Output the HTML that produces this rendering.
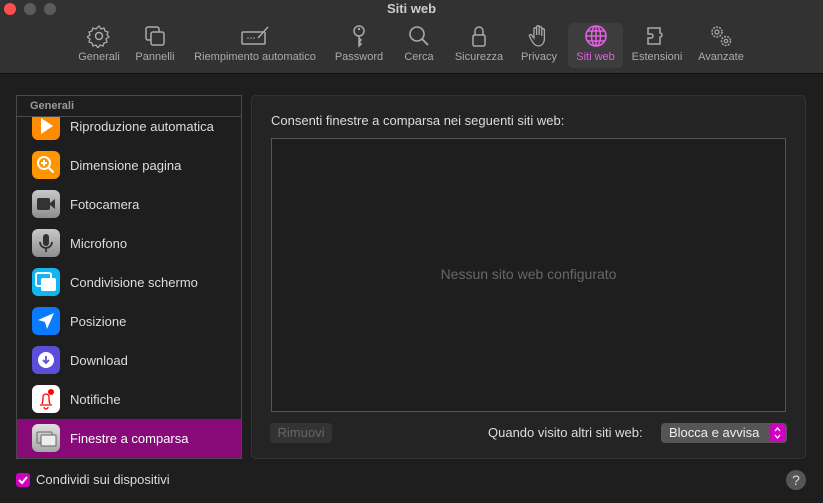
<!DOCTYPE html>
<html><head><meta charset="utf-8"><style>
*{margin:0;padding:0;box-sizing:border-box}
body{width:823px;height:503px;background:#1e1e1e;font-family:"Liberation Sans",sans-serif;position:relative;overflow:hidden;color:#ddd}
.tb{position:absolute;left:0;top:0;width:823px;height:74px;background:#323232;border-bottom:1px solid #111}
.dot{position:absolute;top:3px;width:12px;height:12px;border-radius:50%}
.title{position:absolute;top:1px;left:0;width:823px;text-align:center;font-size:13px;font-weight:bold;color:#ccc}
.ti{position:absolute;top:24px;text-align:center;font-size:11px;color:#aaa}
.ti svg{display:block;margin:0 auto 3px;height:24px}
.ti span{white-space:nowrap}
.sel{position:absolute;left:568px;top:23px;width:55px;height:45px;background:#3d3d3d;border-radius:5px}
.side{position:absolute;left:16px;top:95px;width:226px;height:364px;border:1px solid #4a4a4a;background:#1e1e1e;overflow:hidden}
.sh{position:relative;z-index:2;background:#1e1e1e;height:21px;border-bottom:1px solid #4a4a4a;font-size:11px;font-weight:bold;color:#999;padding:4px 0 0 13px}
.row{position:absolute;left:0;width:224px;height:39px;font-size:13px;color:#ddd}
.row .ic{position:absolute;left:15px;top:5px;width:28px;height:28px;border-radius:6px}
.row span{position:absolute;left:53px;top:12px}
.panel{position:absolute;left:251px;top:95px;width:555px;height:364px;background:#242424;border:1px solid #333;border-radius:5px}
.box{position:absolute;left:271px;top:138px;width:515px;height:274px;border:1px solid #555;background:#1e1e1e}
</style></head><body>
<div class="tb">
<div class="dot" style="left:4px;background:#fe4e4f"></div>
<div class="dot" style="left:24px;background:#5b5b5b"></div>
<div class="dot" style="left:44px;background:#5b5b5b"></div>
<div class="title">Siti web</div>
<div class="sel"></div>
<div class="ti" style="left:74px;width:50px"><svg viewBox="0 0 24 24" width="24"><circle cx="12" cy="12" r="3.5" fill="none" stroke="#aaa" stroke-width="1.5"/><path d="M12 2l2 3 3-1 1 3 3 1-1 3 2 2-3 2 1 3-3 1-1 3-3-1-2 3-2-3-3 1-1-3-3-1 1-3-3-2 3-2-1-3 3-1 1-3 3 1z" fill="none" stroke="#aaa" stroke-width="1.3"/></svg><span>Generali</span></div>
<div class="ti" style="left:131px;width:48px"><svg viewBox="0 0 24 24" width="24"><rect x="3" y="3" width="13" height="13" rx="2" fill="none" stroke="#aaa" stroke-width="1.5"/><rect x="8" y="8" width="13" height="13" rx="2" fill="#323232" stroke="#aaa" stroke-width="1.5"/></svg><span>Pannelli</span></div>
<div class="ti" style="left:188px;width:134px"><svg viewBox="0 0 30 24" width="30"><rect x="2" y="8" width="23" height="12" rx="1" fill="none" stroke="#aaa" stroke-width="1.5"/><path d="M18 14L28 3" stroke="#aaa" stroke-width="1.5"/><circle cx="8" cy="14" r=".8" fill="#aaa"/><circle cx="11" cy="14" r=".8" fill="#aaa"/><circle cx="14" cy="14" r=".8" fill="#aaa"/></svg><span>Riempimento automatico</span></div>
<div class="ti" style="left:333px;width:52px"><svg viewBox="0 0 24 24" width="24"><circle cx="12" cy="7" r="5" fill="none" stroke="#aaa" stroke-width="1.5"/><path d="M12 12v10l2-2-2-2 2-2-2-2" fill="none" stroke="#aaa" stroke-width="1.5"/><circle cx="12" cy="5" r="1.2" fill="#aaa"/></svg><span>Password</span></div>
<div class="ti" style="left:400px;width:38px"><svg viewBox="0 0 24 24" width="24"><circle cx="10" cy="10" r="7" fill="none" stroke="#aaa" stroke-width="1.6"/><path d="M15 15l6 6" stroke="#aaa" stroke-width="1.8"/></svg><span>Cerca</span></div>
<div class="ti" style="left:451px;width:56px"><svg viewBox="0 0 24 24" width="24"><path d="M8 11V7a4 4 0 018 0v4" fill="none" stroke="#aaa" stroke-width="1.5"/><rect x="6" y="11" width="12" height="11" rx="1.5" fill="none" stroke="#aaa" stroke-width="1.5"/></svg><span>Sicurezza</span></div>
<div class="ti" style="left:516px;width:46px"><svg viewBox="0 0 24 24" width="24"><path d="M7 14V5a1.3 1.3 0 012.6 0v6V3a1.3 1.3 0 012.6 0v8V4a1.3 1.3 0 012.6 0v8V6a1.3 1.3 0 012.6 0v9c0 4-3 7-6 7s-5-2-7-6l-2-4a1.3 1.3 0 012.3-1z" fill="none" stroke="#aaa" stroke-width="1.3"/></svg><span>Privacy</span></div>
<div class="ti" style="left:568px;width:55px;color:#e45fe4"><svg viewBox="0 0 24 24" width="24"><circle cx="12" cy="12" r="10" fill="none" stroke="#e45fe4" stroke-width="1.6"/><ellipse cx="12" cy="12" rx="4.5" ry="10" fill="none" stroke="#e45fe4" stroke-width="1.5"/><path d="M2 12h20M4 7h16M4 17h16M12 2v20" stroke="#e45fe4" stroke-width="1.5"/></svg><span>Siti web</span></div>
<div class="ti" style="left:628px;width:58px"><svg viewBox="0 0 24 24" width="24"><path d="M3 4h12v5a2 2 0 110 4v7H3v-6h3a2 2 0 000-4H3z" fill="none" stroke="#aaa" stroke-width="1.5"/></svg><span>Estensioni</span></div>
<div class="ti" style="left:694px;width:54px"><svg viewBox="0 0 24 24" width="24"><circle cx="8" cy="8" r="5" fill="none" stroke="#aaa" stroke-width="1.5" stroke-dasharray="2 1.2"/><circle cx="8" cy="8" r="2" fill="none" stroke="#aaa" stroke-width="1.2"/><circle cx="17" cy="17" r="4.5" fill="none" stroke="#aaa" stroke-width="1.5" stroke-dasharray="2 1.2"/><circle cx="17" cy="17" r="1.7" fill="none" stroke="#aaa" stroke-width="1.2"/></svg><span>Avanzate</span></div>
</div>

<div class="side">
<div class="sh">Generali</div>
<div class="row" style="top:11px"><div class="ic" style="background:#ff8c00"><svg width="28" height="28"><path d="M9 6l12 8-12 8z" fill="#fff"/></svg></div><span>Riproduzione automatica</span></div>
<div class="row" style="top:50px"><div class="ic" style="background:#ff9500"><svg width="28" height="28"><circle cx="12" cy="12" r="6" fill="none" stroke="#fff" stroke-width="2"/><path d="M16.5 16.5l5 5M12 9v6M9 12h6" stroke="#fff" stroke-width="2"/></svg></div><span>Dimensione pagina</span></div>
<div class="row" style="top:89px"><div class="ic" style="background:linear-gradient(#c8c8c8,#8e8e8e)"><svg width="28" height="28"><rect x="5" y="8" width="13" height="12" rx="2" fill="#333"/><path d="M18 13l5-4v10l-5-4z" fill="#333"/></svg></div><span>Fotocamera</span></div>
<div class="row" style="top:128px"><div class="ic" style="background:linear-gradient(#c8c8c8,#8e8e8e)"><svg width="28" height="28"><rect x="11" y="5" width="6" height="12" rx="3" fill="#333"/><path d="M8 13a6 6 0 0012 0M14 19v4" fill="none" stroke="#333" stroke-width="1.8"/></svg></div><span>Microfono</span></div>
<div class="row" style="top:167px"><div class="ic" style="background:#12b5f0"><svg width="28" height="28"><rect x="4" y="5" width="15" height="13" rx="2" fill="none" stroke="#fff" stroke-width="2"/><rect x="9" y="10" width="15" height="13" rx="2" fill="#fff"/></svg></div><span>Condivisione schermo</span></div>
<div class="row" style="top:206px"><div class="ic" style="background:#0a7aff"><svg width="28" height="28"><path d="M22 6L6 13l7 2 2 7z" fill="#fff"/></svg></div><span>Posizione</span></div>
<div class="row" style="top:245px"><div class="ic" style="background:#5b4fd9"><svg width="28" height="28"><circle cx="14" cy="14" r="8" fill="#fff"/><path d="M14 10v7M11 14l3 3 3-3" fill="none" stroke="#5b4fd9" stroke-width="1.8"/></svg></div><span>Download</span></div>
<div class="row" style="top:284px"><div class="ic" style="background:#fff"><svg width="28" height="28"><path d="M8 20h12M10 19c1-2 1-5 1-7a3 3 0 016 0c0 2 0 5 1 7M12 22a2 2 0 004 0" fill="none" stroke="#f00" stroke-width="1.3"/><circle cx="19" cy="7" r="3" fill="#f00"/></svg></div><span>Notifiche</span></div>
<div class="row" style="top:323px;background:#880a78"><div class="ic" style="background:linear-gradient(#e0e0e0,#a8a8a8)"><svg width="28" height="28"><rect x="5" y="8" width="15" height="11" rx="1" fill="none" stroke="#666"/><rect x="9" y="11" width="15" height="11" rx="1" fill="#eee" stroke="#666"/></svg></div><span style="color:#fff">Finestre a comparsa</span></div>
</div>

<div style="position:absolute;left:16px;top:473px;width:14px;height:14px;border-radius:3px;background:#d000c0"><svg width="14" height="14"><path d="M3 7l3 3 5-6" fill="none" stroke="#fff" stroke-width="2"/></svg></div>
<div style="position:absolute;left:36px;top:472px;font-size:13px;color:#ddd">Condividi sui dispositivi</div>

<div class="panel"></div>
<div style="position:absolute;left:271px;top:113px;font-size:13px;color:#ddd">Consenti finestre a comparsa nei seguenti siti web:</div>
<div class="box"></div>
<div style="position:absolute;left:271px;top:266px;width:515px;text-align:center;font-size:14px;color:#676767">Nessun sito web configurato</div>
<div style="position:absolute;left:270px;top:423px;width:62px;height:20px;border-radius:4px;background:#333;color:#666;font-size:13px;text-align:center;line-height:20px">Rimuovi</div>
<div style="position:absolute;left:488px;top:425px;font-size:13px;color:#ddd">Quando visito altri siti web:</div>
<div style="position:absolute;left:661px;top:423px;width:126px;height:20px;border-radius:4px;background:#555;color:#eee;font-size:13px;line-height:20px;padding-left:8px">Blocca e avvisa</div>
<div style="position:absolute;left:770px;top:424px;width:15px;height:18px;border-radius:3px;background:#d000c0"><svg width="15" height="18"><path d="M5 7l2.5-3 2.5 3M5 11l2.5 3 2.5-3" fill="none" stroke="#fff" stroke-width="1.3"/></svg></div>
<div style="position:absolute;left:786px;top:470px;width:20px;height:20px;border-radius:50%;background:#555;color:#ddd;font-size:14px;text-align:center;line-height:20px">?</div>
</body></html>
